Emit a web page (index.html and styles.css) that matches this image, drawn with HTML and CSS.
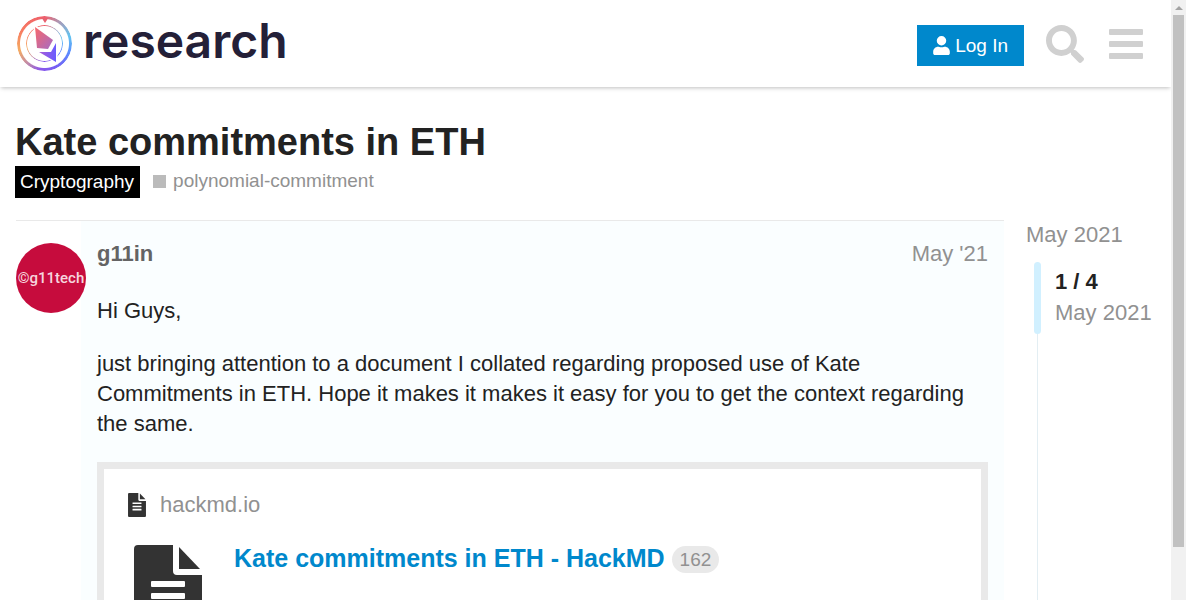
FILE: index.html
```html
<!DOCTYPE html>
<html lang="en">
<head>
<meta charset="utf-8">
<title>Kate commitments in ETH - Cryptography - Ethereum Research</title>
<link rel="stylesheet" href="styles.css">
</head>
<body>
<svg class="sprite" aria-hidden="true">
  <symbol id="file-lines" viewBox="0 0 68 91"><path d="M4 0H39V26Q39 30 43 30H68V87Q68 91 64 91H4Q0 91 0 87V4Q0 0 4 0ZM18 36Q17 36 17 37V41Q17 42 18 42H50Q51 42 51 41V37Q51 36 50 36ZM18 48Q17 48 17 49V53Q17 54 18 54H50Q51 54 51 53V49Q51 48 50 48ZM18 60Q17 60 17 61V65Q17 66 18 66H50Q51 66 51 65V61Q51 60 50 60Z"/><path d="M45 2V24H66Z"/></symbol>
</svg>
<div class="window">
  <div class="page">
    <header class="header">
      <a class="logo" href="#">
        <span class="emblem">
          <svg viewBox="0 0 56 56" aria-hidden="true">
            <defs>
              <linearGradient id="upper" x1="0" y1="0" x2="1" y2="1"><stop offset="0" stop-color="#f9676a"/><stop offset="1" stop-color="#a56cc4"/></linearGradient>
              <linearGradient id="lower" x1="0" y1="0" x2="1" y2="0"><stop offset="0" stop-color="#a95bd8"/><stop offset="1" stop-color="#6a5cff"/></linearGradient>
            </defs>
            <path fill="#e8606f" d="M25 2h6l-1 2-2 3-2-3z"/>
            <g fill="#fff" stroke="#fff" stroke-width="3"><path d="M18 11L36 24 32 33 20 32Z"/><path d="M22 36L34 36 39 27V46Z"/></g>
            <path fill="url(#upper)" d="M18 11L36 24 31 33 20 32Z"/>
            <path fill="url(#lower)" d="M22 36L34 36 39 27V46Z"/>
          </svg>
        </span>
        <span class="wordmark">research</span>
      </a>
      <nav class="actions">
        <button class="login" type="button">
          <svg viewBox="0 0 448 512" aria-hidden="true"><path d="M224 256a128 128 0 1 0 0-256 128 128 0 0 0 0 256zm90 32h-17a174 174 0 0 1-146 0h-17C60 288 0 348 0 422v42c0 27 21 48 48 48h352c27 0 48-21 48-48v-42c0-74-60-134-134-134z"/></svg>
          Log In
        </button>
        <button class="icon-button" type="button" aria-label="Search">
          <svg class="search" viewBox="0 0 512 512"><path d="M505 442.700L405.300 343c-4.500-4.500-10.600-7-17-7H372c27.600-35.300 44-79.700 44-128C416 93.100 322.900 0 208 0S0 93.100 0 208s93.100 208 208 208c48.300 0 92.700-16.400 128-44v16.300c0 6.400 2.500 12.500 7 17l99.700 99.700c9.400 9.400 24.600 9.400 33.900 0l28.300-28.300c9.400-9.400 9.400-24.600.1-34zM208 336c-70.700 0-128-57.200-128-128 0-70.700 57.200-128 128-128 70.700 0 128 57.200 128 128 0 70.700-57.200 128-128 128z"/></svg>
        </button>
        <button class="icon-button" type="button" aria-label="Menu">
          <svg class="bars" viewBox="0 0 34 38"><rect y="4" width="34" height="6" rx="1"/><rect y="16" width="34" height="6" rx="1"/><rect y="28" width="34" height="6" rx="1"/></svg>
        </button>
      </nav>
    </header>
    <main class="main">
      <h1 class="title">Kate commitments in ETH</h1>
      <div class="categories">
        <a class="category" href="#">Cryptography</a>
        <a class="tag" href="#">polynomial-commitment</a>
      </div>
      <div class="columns">
        <article class="post">
          <div class="avatar"><span>©g11tech</span></div>
          <div class="post-body">
            <div class="meta"><a class="author" href="#">g11in</a><a class="date" href="#">May '21</a></div>
            <p>Hi Guys,</p>
            <p>just bringing attention to a document I collated regarding proposed use of Kate Commitments in ETH. Hope it makes it makes it easy for you to get the context regarding the same.</p>
            <aside class="onebox">
              <div class="source"><svg class="favicon" preserveAspectRatio="none" aria-hidden="true"><use href="#file-lines"/></svg><a href="#">hackmd.io</a></div>
              <div class="preview">
                <svg class="thumbnail" aria-hidden="true"><use href="#file-lines"/></svg>
                <h2><a href="#">Kate commitments in ETH - HackMD</a> <span class="clicks">162</span></h2>
              </div>
            </aside>
          </div>
        </article>
        <aside class="timeline">
          <a href="#">May 2021</a>
          <div class="track">
            <div class="handle"></div>
            <div class="position"><strong>1 / 4</strong><span>May 2021</span></div>
          </div>
        </aside>
      </div>
    </main>
  </div>
  <div class="scrollbar" aria-hidden="true"><span class="arrow"></span><span class="thumb"></span></div>
</div>
</body>
</html>
```
FILE: styles.css
```css
* { box-sizing: border-box; }
body {
  margin: 0;
  background: #fff;
  color: #222;
  font: 22px/30px "Liberation Sans", Arial, sans-serif;
}
a { color: inherit; text-decoration: none; }
button { border: 0; font: inherit; cursor: pointer; }
svg { display: block; fill: currentColor; flex: none; }
.sprite { position: absolute; width: 0; height: 0; }
.window {
  display: grid;
  grid-template-columns: minmax(0, 1fr) 15px;
  height: 100vh;
  overflow: hidden;
}
.page { overflow: hidden; display: flex; flex-direction: column; }

.header {
  display: flex;
  flex: none;
  align-items: center;
  justify-content: space-between;
  padding: 15px 28px 15px 16px;
  box-shadow: 0 2px 4px -1px rgba(0, 0, 0, .25);
}
.logo { display: flex; align-items: flex-start; gap: 10px; }
.emblem {
  display: grid;
  width: 57px;
  height: 57px;
}
.emblem > svg, .emblem::before, .emblem::after { grid-area: 1 / 1; place-self: center; }
.emblem::before, .emblem::after {
  content: "";
  border-radius: 50%;
  background: conic-gradient(#ee5f6c, #a99bb8 35deg, #62c3f0 75deg, #5b8cff 110deg, #7460f4 150deg, #8b58ea 190deg, #c18baa 220deg, #f5ab62 255deg, #f77b62 300deg, #ee5f6c);
}
.emblem::before {
  width: 55px;
  height: 55px;
  mask: radial-gradient(circle, transparent 24px, #000 25px);
}
.emblem::after {
  width: 37px;
  height: 37px;
  mask: radial-gradient(circle, transparent 17px, #000 18px);
}
.emblem > svg { width: 56px; height: 56px; z-index: 1; }
.wordmark {
  color: #242038;
  font: 600 48px/52px Inter, sans-serif;
}
.actions { display: flex; align-items: center; gap: 22px; }
.login {
  display: flex;
  align-items: center;
  gap: 5px;
  margin-top: 4px;
  padding: 8px 16px;
  background: #08c;
  color: #fff;
  font-size: 19px;
  line-height: 25px;
}
.login svg { width: 17px; height: 19px; }
.icon-button { padding: 0; background: none; color: #d0d0d0; }
.search { width: 38px; height: 38px; }
.bars { width: 34px; height: 38px; margin-left: 3px; }

.main { flex: 1; padding: 32px 15px 0; }
.title { margin: 0 0 1px; font-size: 38px; line-height: 46px; }
.categories {
  display: flex;
  align-items: flex-start;
  gap: 13px;
  font-size: 19px;
  line-height: 32px;
}
.category { padding: 0 6px 0 5px; background: #000; color: #fff; }
.tag { display: flex; align-items: center; gap: 7px; color: #919191; line-height: 30px; }
.tag::before { content: ""; width: 13px; height: 13px; background: #bbb; }
.columns {
  display: grid;
  grid-template-columns: minmax(0, 1fr) 130px;
  gap: 22px;
  margin-top: 22px;
}
.post {
  display: flex;
  margin-left: 1px;
  border-top: 1px solid #e9e9e9;
}
.avatar {
  display: grid;
  place-items: center;
  flex: none;
  width: 70px;
  height: 70px;
  margin: 22px -5px 0 0;
  border-radius: 50%;
  background: #c60c3d;
  color: #f6d5de;
  font: 500 15px/20px Roboto, sans-serif;
  overflow: hidden;
  z-index: 1;
}
.post-body {
  flex: 1;
  min-width: 0;
  padding: 18px 16px 0;
  background: #fafeff;
}
.meta { display: flex; justify-content: space-between; margin-bottom: 27px; }
.author { color: #646464; font-weight: bold; }
.date { color: #919191; }
.post-body p { margin: 0 0 23px; }
.onebox { padding: 21px 23px; border: 7px solid #e9e9e9; background: #fff; }
.source { display: flex; align-items: center; gap: 13px; color: #919191; }
.favicon { width: 20px; height: 24px; color: #333; }
.preview { display: flex; gap: 32px; padding: 25px 7px 0; }
.thumbnail { width: 68px; height: 91px; color: #333; }
.preview h2 { margin: 0; font-size: 25px; line-height: 26px; color: #08c; }
.clicks {
  display: inline-block;
  padding: 0 8px;
  border-radius: 14px;
  background: #e9e9e9;
  color: #919191;
  font-size: 19px;
  font-weight: normal;
  line-height: 27px;
  vertical-align: 1px;
}
.timeline { color: #919191; display: flex; flex-direction: column; }
.track {
  display: grid;
  grid-template-columns: 7px 1fr;
  align-items: start;
  align-content: start;
  gap: 14px;
  flex: 1;
  margin: 12px 0 0 8px;
  background: linear-gradient(#e3eef3, #e3eef3) 3px 0 / 1px 100% no-repeat;
}
.handle { height: 72px; border-radius: 4px; background: #d1f0ff; }
.position { display: grid; padding-top: 4px; line-height: 31px; }
.position strong { color: #222; }

.scrollbar {
  display: grid;
  grid-template-rows: 15px 1fr 53px;
  justify-items: center;
  background: #f1f1f1;
}
.arrow { align-self: center; border: 4px solid transparent; border-top: 0; border-bottom-color: #a3a3a3; }
.thumb { width: 11px; background: #c1c1c1; }
```
